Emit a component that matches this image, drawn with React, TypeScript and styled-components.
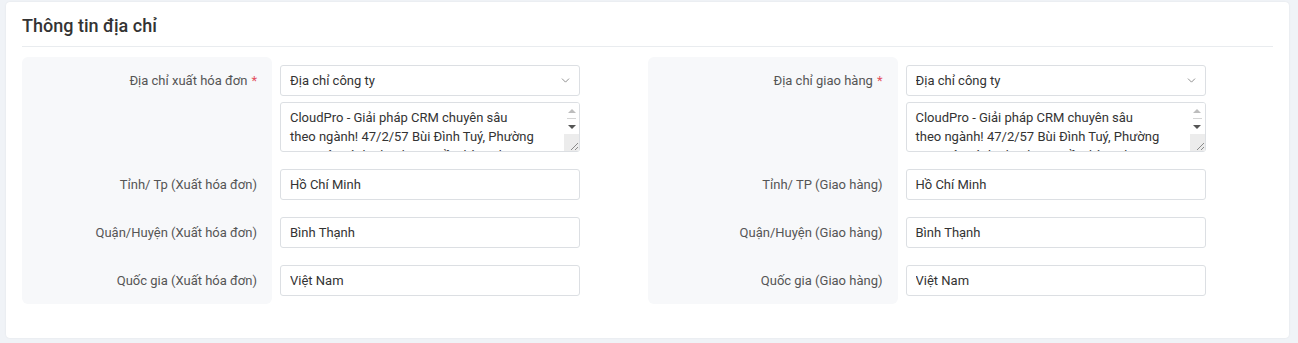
import React from 'react';
import styled, { createGlobalStyle } from 'styled-components';
import { ChevronDown } from 'lucide-react';

const GlobalStyle = createGlobalStyle`
  * { box-sizing: border-box; }
  body {
    margin: 0;
    background: #f0f3f7;
    font-family: Roboto, "Noto Sans", sans-serif;
    color: #333;
  }
`;

const Page = styled.div`
  padding: 2px 9px 6px 6px;
`;

const Card = styled.section`
  background: #fff;
  border-radius: 4px;
  box-shadow: 0 0 2px rgba(0, 0, 0, 0.08);
  padding: 12px 16px 34px;
`;

const CardTitle = styled.h4`
  margin: 0 0 10px;
  padding-bottom: 8px;
  border-bottom: 1px solid #e9ecef;
  font-size: 18px;
  line-height: 24px;
  font-weight: 500;
  color: #333;
`;

const Columns = styled.div`
  display: grid;
  grid-template-columns: 1fr 1fr;
`;

const Section = styled.div`
  display: grid;
  grid-template-columns: 250px 300px;
  grid-template-rows: auto 31px 31px 31px;
  column-gap: 8px;
  row-gap: 17px;
  padding: 8px 0;

  &::before {
    content: '';
    grid-column: 1;
    grid-row: 1 / -1;
    margin: -8px 0;
    background: #f7f8fa;
    border-radius: 6px;
  }
`;

const Label = styled.label<{ $row: number; $top?: boolean }>`
  grid-column: 1;
  grid-row: ${(p) => p.$row};
  align-self: ${(p) => (p.$top ? 'start' : 'center')};
  padding-right: 15px;
  text-align: right;
  font-size: 13px;
  line-height: 31px;
  color: #555;
`;

const Required = styled.span`
  color: #e3505e;
  margin-left: 4px;
`;

const FieldGroup = styled.div`
  grid-column: 2;
  grid-row: 1;
  display: flex;
  flex-direction: column;
  gap: 6px;
`;

const SelectWrap = styled.div`
  position: relative;
  height: 31px;
`;

const Select = styled.select`
  appearance: none;
  width: 100%;
  height: 31px;
  border: 1px solid #dcdfe3;
  border-radius: 3px;
  background: #fff;
  padding: 0 28px 0 9px;
  font: inherit;
  font-size: 13px;
  color: #333;
`;

const Chevron = styled(ChevronDown)`
  position: absolute;
  right: 8px;
  top: 9px;
  color: #777;
  pointer-events: none;
`;

const TextAreaWrap = styled.div`
  position: relative;
  height: 50px;
`;

const TextArea = styled.textarea`
  display: block;
  width: 100%;
  height: 50px;
  border: 1px solid #dcdfe3;
  border-radius: 3px;
  padding: 5px 34px 0 9px;
  font: inherit;
  font-size: 13px;
  line-height: 19px;
  color: #333;
  resize: none;
  overflow: hidden;
`;

/* windows-style scrollbar drawn over the textarea's right edge */
const ScrollBar = styled.div`
  position: absolute;
  top: 1px;
  right: 1px;
  bottom: 1px;
  width: 15px;
  display: flex;
  flex-direction: column;
  background: #fff;
  border-radius: 0 2px 2px 0;
  pointer-events: none;
`;

const ArrowButton = styled.div`
  height: 15px;
  display: flex;
  align-items: center;
  justify-content: center;
`;

const Separator = styled.div`
  height: 1px;
  margin: 0 3px;
  background: #d4d4d4;
`;

const ResizeCorner = styled.div`
  flex: 1;
  display: flex;
  align-items: flex-end;
  justify-content: flex-end;
  background: #ececec;
  border-bottom-right-radius: 2px;
  color: #8a8a8a;
`;

const Input = styled.input<{ $row: number }>`
  grid-column: 2;
  grid-row: ${(p) => p.$row};
  width: 100%;
  height: 31px;
  border: 1px solid #dcdfe3;
  border-radius: 3px;
  padding: 0 9px;
  font: inherit;
  font-size: 13px;
  color: #333;
`;

type AddressBlock = {
  addressLabel: string;
  fields: { label: string; value: string }[];
};

const ADDRESS =
  'CloudPro - Giải pháp CRM chuyên sâu\ntheo ngành! 47/2/57 Bùi Đình Tuý, Phường 24, Quận Bình Thạnh, TP. Hồ Chí Minh';

const blocks: AddressBlock[] = [
  {
    addressLabel: 'Địa chỉ xuất hóa đơn',
    fields: [
      { label: 'Tỉnh/ Tp (Xuất hóa đơn)', value: 'Hồ Chí Minh' },
      { label: 'Quận/Huyện (Xuất hóa đơn)', value: 'Bình Thạnh' },
      { label: 'Quốc gia (Xuất hóa đơn)', value: 'Việt Nam' },
    ],
  },
  {
    addressLabel: 'Địa chỉ giao hàng',
    fields: [
      { label: 'Tỉnh/ TP (Giao hàng)', value: 'Hồ Chí Minh' },
      { label: 'Quận/Huyện (Giao hàng)', value: 'Bình Thạnh' },
      { label: 'Quốc gia (Giao hàng)', value: 'Việt Nam' },
    ],
  },
];

function FakeScrollBar() {
  return (
    <ScrollBar>
      <ArrowButton>
        <svg width="8" height="4" viewBox="0 0 8 4">
          <polygon points="0,4 4,0 8,4" fill="#bdbdbd" />
        </svg>
      </ArrowButton>
      <Separator />
      <ArrowButton>
        <svg width="8" height="4" viewBox="0 0 8 4">
          <polygon points="0,0 8,0 4,4" fill="#555" />
        </svg>
      </ArrowButton>
      <ResizeCorner>
        <svg width="10" height="10" viewBox="0 0 10 10">
          <path d="M9 2 L2 9 M9 6 L6 9" stroke="currentColor" strokeWidth="1" />
        </svg>
      </ResizeCorner>
    </ScrollBar>
  );
}

function AddressSection({ block }: { block: AddressBlock }) {
  return (
    <Section>
      <Label $row={1} $top>
        {block.addressLabel}
        <Required>*</Required>
      </Label>
      <FieldGroup>
        <SelectWrap>
          <Select defaultValue="company">
            <option value="company">Địa chỉ công ty</option>
          </Select>
          <Chevron size={13} strokeWidth={1.5} />
        </SelectWrap>
        <TextAreaWrap>
          <TextArea defaultValue={ADDRESS} />
          <FakeScrollBar />
        </TextAreaWrap>
      </FieldGroup>
      {block.fields.map((f, i) => (
        <React.Fragment key={f.label}>
          <Label $row={i + 2}>{f.label}</Label>
          <Input $row={i + 2} defaultValue={f.value} />
        </React.Fragment>
      ))}
    </Section>
  );
}

export default function App() {
  return (
    <>
      <GlobalStyle />
      <Page>
        <Card>
          <CardTitle>Thông tin địa chỉ</CardTitle>
          <Columns>
            {blocks.map((b) => (
              <AddressSection key={b.addressLabel} block={b} />
            ))}
          </Columns>
        </Card>
      </Page>
    </>
  );
}
